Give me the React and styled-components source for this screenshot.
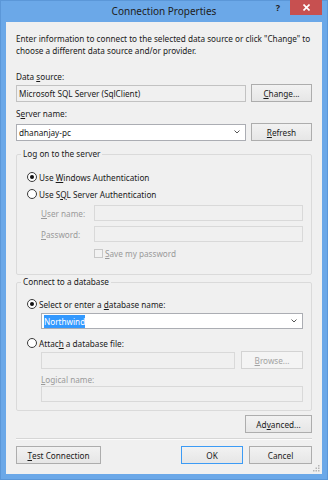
import React from "react";
import styled, { createGlobalStyle } from "styled-components";

const Global = createGlobalStyle`
  html, body { margin: 0; padding: 0; }
  body {
    width: 328px;
    height: 480px;
    overflow: hidden;
    font-family: "Noto Sans", "Open Sans", sans-serif;
    font-size: 8.2px;
    color: #1a1a1a;
  }
  * { box-sizing: border-box; }
`;

const Window = styled.div`
  width: 328px;
  height: 480px;
  background: #6ba8e8;
  border: 1px solid #5b97d8;
  padding: 0 5px 5px 5px;
  display: flex;
  flex-direction: column;
`;

const TitleBar = styled.div`
  height: 21px;
  display: grid;
  grid-template-columns: 1fr auto 1fr;
  align-items: start;
`;

const Title = styled.div`
  grid-column: 2;
  line-height: 22px;
  font-size: 10px;
  color: #202020;
  margin-top: -1px;
`;

const Controls = styled.div`
  grid-column: 3;
  justify-self: end;
  display: flex;
  align-items: flex-start;
  margin-top: -1px;
`;

const HelpButton = styled.div`
  width: 24px;
  height: 15px;
  font-size: 9px;
  font-weight: 700;
  line-height: 15px;
  text-align: center;
  color: #222;
`;

const CloseButton = styled.div`
  width: 32px;
  height: 15px;
  background: #c75050;
  display: flex;
  align-items: center;
  justify-content: center;
`;

const Client = styled.div`
  position: relative;
  flex: 1;
  background: #f0f0f0;
  padding: 11px 10px 0 10px;
  display: flex;
  flex-direction: column;
`;

const Intro = styled.p`
  margin: 0;
  line-height: 12px;
`;

const Label = styled.div`
  line-height: 12px;
  margin-top: ${(p) => p.$top || 0}px;
  color: ${(p) => (p.$disabled ? "#9a9a9a" : "inherit")};
  padding-left: ${(p) => p.$indent || 0}px;
`;

const Key = styled.span`
  text-decoration: underline;
  text-underline-offset: 1px;
`;

const Row = styled.div`
  display: flex;
  align-items: center;
  gap: ${(p) => p.$gap ?? 5}px;
  margin-top: ${(p) => p.$top || 0}px;
  padding-left: ${(p) => p.$indent || 0}px;
`;

const Field = styled.div`
  flex: 1;
  height: ${(p) => p.$h || 17}px;
  display: flex;
  align-items: center;
  padding: 0 2px 0 2px;
  background: ${(p) => (p.$white ? "#ffffff" : "#f0f0f0")};
  border: 1px solid ${(p) => (p.$disabled ? "#d9d9d9" : p.$white ? "#abadb3" : "#c2c2c2")};
  white-space: nowrap;
  overflow: hidden;
`;

const FieldText = styled.span`
  flex: 1;
`;

const Selected = styled.span`
  background: #3399ff;
  color: #fff;
  padding: 1px 0;
  line-height: 11px;
`;

const Chevron = styled.svg`
  flex: none;
  margin-right: 3px;
`;

const Button = styled.div`
  width: ${(p) => p.$w || 61}px;
  height: 18px;
  flex: none;
  display: flex;
  align-items: center;
  justify-content: center;
  white-space: nowrap;
  background: ${(p) => (p.$disabled ? "#f4f4f4" : "linear-gradient(#f2f2f2, #e6e6e6)")};
  border: 1px solid ${(p) => (p.$default ? "#3c9bf5" : p.$disabled ? "#d3d3d3" : "#adadad")};
  color: ${(p) => (p.$disabled ? "#a3a3a3" : "inherit")};
  margin-left: ${(p) => (p.$push ? "auto" : "0")};
`;

const Group = styled.fieldset`
  margin: ${(p) => p.$top || 0}px 0 0 0;
  padding: 0;
  border: 1px solid #dadada;
  border-radius: 2px;
  min-width: 0;
`;

const Legend = styled.legend`
  margin-left: 4px;
  padding: 0 2px;
  line-height: 12px;
`;

const GroupBody = styled.div`
  padding: ${(p) => p.$pad};
  display: flex;
  flex-direction: column;
`;

const RadioRow = styled.label`
  display: flex;
  align-items: center;
  height: 12px;
  white-space: nowrap;
  margin-top: ${(p) => p.$top || 0}px;
`;

const RadioCircle = styled.span`
  width: 10px;
  height: 10px;
  border-radius: 50%;
  border: 1px solid #3a3a3a;
  background: #fff;
  margin-right: 2px;
  display: flex;
  align-items: center;
  justify-content: center;
  flex: none;
  &::after {
    content: "";
    width: 4px;
    height: 4px;
    border-radius: 50%;
    background: ${(p) => (p.$checked ? "#111" : "transparent")};
  }
`;

const FormLabel = styled.span`
  width: 53px;
  flex: none;
  color: #9a9a9a;
`;

const CheckRow = styled.div`
  display: flex;
  align-items: center;
  height: 12px;
  margin-top: 5px;
  padding-left: 67px;
  color: #9a9a9a;
`;

const CheckBox = styled.span`
  width: 9px;
  height: 9px;
  border: 1px solid #c8c8c8;
  background: #f2f2f2;
  margin-right: 2px;
  flex: none;
`;

const ButtonRow = styled.div`
  display: flex;
  gap: 6px;
  margin-top: ${(p) => p.$top || 0}px;
`;

const Separator = styled.div`
  margin-top: 5px;
  height: 2px;
  background: #d6d6d6;
  border-bottom: 1px solid #fbfbfb;
`;

const Grip = styled.svg`
  position: absolute;
  right: 2px;
  bottom: 2px;
`;

const ChevronIcon = () => (
  <Chevron width="6" height="4" viewBox="0 0 6 4">
    <path d="M0.5 0.5 L3 3 L5.5 0.5" fill="none" stroke="#555" strokeWidth="1" />
  </Chevron>
);

export default function App() {
  return (
    <>
      <Global />
      <Window>
        <TitleBar>
          <Title>Connection Properties</Title>
          <Controls>
            <HelpButton>?</HelpButton>
            <CloseButton>
              <svg width="7" height="7" viewBox="0 0 7 7">
                <path d="M0.5 0.5 L6.5 6.5 M6.5 0.5 L0.5 6.5" stroke="#fff" strokeWidth="1.6" />
              </svg>
            </CloseButton>
          </Controls>
        </TitleBar>
        <Client>
          <Intro>
            Enter information to connect to the selected data source or click "Change" to
            <br />
            choose a different data source and/or provider.
          </Intro>

          <Label $top={14}>
            Data <Key>s</Key>ource:
          </Label>
          <Row $top={1}>
            <Field>
              <FieldText>Microsoft SQL Server (SqlClient)</FieldText>
            </Field>
            <Button>
              <Key>C</Key>hange...
            </Button>
          </Row>

          <Label $top={6}>
            S<Key>e</Key>rver name:
          </Label>
          <Row $top={3}>
            <Field $white>
              <FieldText>dhananjay-pc</FieldText>
              <ChevronIcon />
            </Field>
            <Button>
              <Key>R</Key>efresh
            </Button>
          </Row>

          <Group $top={7}>
            <Legend>Log on to the server</Legend>
            <GroupBody $pad="11px 8px 15px 10px">
              <RadioRow>
                <RadioCircle $checked />
                Use&nbsp;<Key>W</Key>indows Authentication
              </RadioRow>
              <RadioRow $top={5}>
                <RadioCircle />
                Use S<Key>Q</Key>L Server Authentication
              </RadioRow>
              <Row $top={5} $indent={14} $gap={0}>
                <FormLabel>
                  <Key>U</Key>ser name:
                </FormLabel>
                <Field $disabled $h={16} />
              </Row>
              <Row $top={5} $indent={14} $gap={0}>
                <FormLabel>
                  <Key>P</Key>assword:
                </FormLabel>
                <Field $disabled $h={16} />
              </Row>
              <CheckRow>
                <CheckBox />
                <Key>S</Key>ave my password
              </CheckRow>
            </GroupBody>
          </Group>

          <Group $top={1}>
            <Legend>Connect to a database</Legend>
            <GroupBody $pad="10px 8px 8px 10px">
              <RadioRow>
                <RadioCircle $checked />
                Select or enter a&nbsp;<Key>d</Key>atabase name:
              </RadioRow>
              <Row $top={3} $indent={14}>
                <Field $white $h={16}>
                  <FieldText>
                    <Selected>Northwind</Selected>
                  </FieldText>
                  <ChevronIcon />
                </Field>
              </Row>
              <RadioRow $top={8}>
                <RadioCircle />
                Attac<Key>h</Key>&nbsp;a database file:
              </RadioRow>
              <Row $top={2} $indent={14} $gap={6}>
                <Field $disabled />
                <Button $disabled $w={62}>
                  <Key>B</Key>rowse...
                </Button>
              </Row>
              <Label $top={5} $disabled $indent={14}>
                <Key>L</Key>ogical name:
              </Label>
              <Row $indent={14}>
                <Field $disabled $h={16} />
              </Row>
            </GroupBody>
          </Group>

          <ButtonRow $top={4}>
            <Button $push $w={67}>
              Ad<Key>v</Key>anced...
            </Button>
          </ButtonRow>
          <Separator />
          <ButtonRow $top={6}>
            <Button $w={85}>
              <Key>T</Key>est Connection
            </Button>
            <Button $push $default $w={62}>
              OK
            </Button>
            <Button $w={63}>Cancel</Button>
          </ButtonRow>

          <Grip width="7" height="7" viewBox="0 0 7 7">
            <rect x="5" y="0" width="1.5" height="1.5" fill="#b5b5b5" />
            <rect x="2.5" y="2.5" width="1.5" height="1.5" fill="#b5b5b5" />
            <rect x="5" y="2.5" width="1.5" height="1.5" fill="#b5b5b5" />
            <rect x="0" y="5" width="1.5" height="1.5" fill="#b5b5b5" />
            <rect x="2.5" y="5" width="1.5" height="1.5" fill="#b5b5b5" />
            <rect x="5" y="5" width="1.5" height="1.5" fill="#b5b5b5" />
          </Grip>
        </Client>
      </Window>
    </>
  );
}
